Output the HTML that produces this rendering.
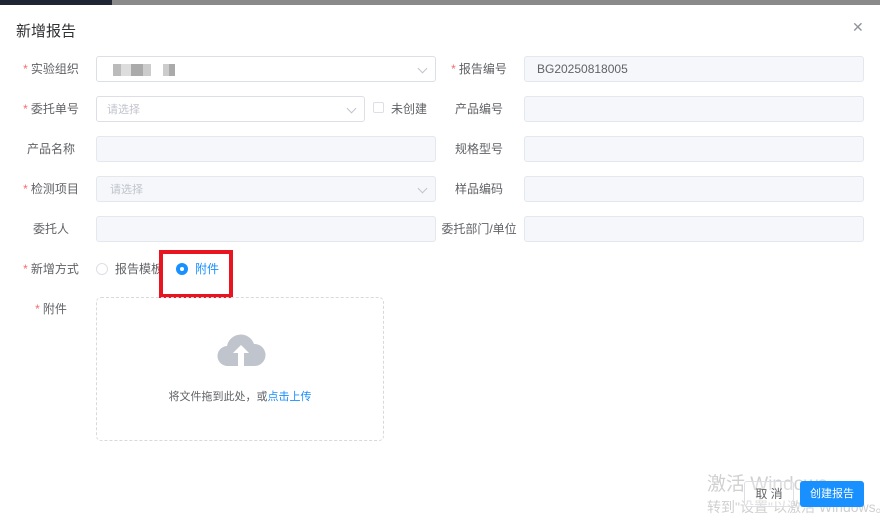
<!DOCTYPE html>
<html><head><meta charset="utf-8"><style>
*{box-sizing:border-box;margin:0;padding:0}
body{width:880px;height:521px;overflow:hidden;background:#fff;font-family:"Liberation Sans","Noto Sans CJK SC",sans-serif;font-size:12px;color:#606266;position:relative}
.top{position:absolute;left:0;top:0;width:880px;height:5px;background:#8a8a8a}
.top .a{position:absolute;left:0;top:0;width:112px;height:5px;background:#1f2633}
.title{position:absolute;left:16px;top:20px;font-size:15px;color:#303133}
.close{position:absolute;left:852px;top:19px;font-size:14px;color:#909399}
.lab{position:absolute;width:86px;text-align:center;line-height:26px;color:#606266;white-space:nowrap}
.lab i{color:#f56c6c;font-style:normal;margin-right:3px}
.inp{position:absolute;height:26px;border:1px solid #dcdfe6;border-radius:3px;background:#fff;line-height:24px;padding-left:10px}
.dis{background:#f5f7fa;border-color:#e4e7ed}
.ph{color:#c0c4cc;font-size:11px}
.arr{position:absolute;right:9px;top:8px;width:7px;height:7px;border-right:1px solid #c0c4cc;border-bottom:1px solid #c0c4cc;transform:rotate(45deg)}
.blk{display:inline-block;height:12px;background:#c8c8c8;vertical-align:middle}
</style></head><body>
<div class="top"><div class="a"></div></div>
<div class="title">新增报告</div>
<div class="close">✕</div>

<div class="lab" style="left:8px;top:56px"><i>*</i>实验组织</div>
<div class="inp" style="left:96px;top:56px;width:340px"><span class="blk" style="width:8px;margin-left:6px;background:#bbb"></span><span class="blk" style="width:10px;background:#ddd"></span><span class="blk" style="width:12px;background:#aaa"></span><span class="blk" style="width:8px;background:#ccc"></span><span class="blk" style="width:6px;margin-left:12px;background:#ccc"></span><span class="blk" style="width:6px;background:#aaa"></span><span class="arr"></span></div>
<div class="lab" style="left:436px;top:56px"><i>*</i>报告编号</div>
<div class="inp dis" style="left:524px;top:56px;width:340px;padding-left:12px;color:#606266">BG20250818005</div>

<div class="lab" style="left:8px;top:96px"><i>*</i>委托单号</div>
<div class="inp" style="left:96px;top:96px;width:269px"><span class="ph">请选择</span><span class="arr"></span></div>
<div style="position:absolute;left:373px;top:102px;width:11px;height:11px;border:1px solid #dcdfe6;border-radius:2px"></div>
<div style="position:absolute;left:391px;top:96px;line-height:26px">未创建</div>
<div class="lab" style="left:436px;top:96px">产品编号</div>
<div class="inp dis" style="left:524px;top:96px;width:340px"></div>

<div class="lab" style="left:8px;top:136px">产品名称</div>
<div class="inp dis" style="left:96px;top:136px;width:340px"></div>
<div class="lab" style="left:436px;top:136px">规格型号</div>
<div class="inp dis" style="left:524px;top:136px;width:340px"></div>

<div class="lab" style="left:8px;top:176px"><i>*</i>检测项目</div>
<div class="inp dis" style="left:96px;top:176px;width:340px;padding-left:13px"><span class="ph">请选择</span><span class="arr"></span></div>
<div class="lab" style="left:436px;top:176px">样品编码</div>
<div class="inp dis" style="left:524px;top:176px;width:340px"></div>

<div class="lab" style="left:8px;top:216px">委托人</div>
<div class="inp dis" style="left:96px;top:216px;width:340px"></div>
<div class="lab" style="left:436px;top:216px">委托部门/单位</div>
<div class="inp dis" style="left:524px;top:216px;width:340px"></div>

<div class="lab" style="left:8px;top:256px"><i>*</i>新增方式</div>
<div style="position:absolute;left:96px;top:263px;width:12px;height:12px;border:1px solid #dcdfe6;border-radius:50%"></div>
<div style="position:absolute;left:115px;top:256px;line-height:26px">报告模板</div>
<div style="position:absolute;left:176px;top:263px;width:12px;height:12px;background:#1890ff;border-radius:50%"><div style="position:absolute;left:4px;top:4px;width:4px;height:4px;background:#fff;border-radius:50%"></div></div>
<div style="position:absolute;left:195px;top:256px;line-height:26px;color:#1890ff">附件</div>
<div style="position:absolute;left:159px;top:250px;width:74px;height:48px;border:4px solid #e8141f"></div>

<div class="lab" style="left:8px;top:296px"><i>*</i>附件</div>
<div style="position:absolute;left:96px;top:297px;width:288px;height:144px;border:1px dashed #d9d9d9;border-radius:5px">
<svg style="position:absolute;left:119px;top:34px" width="50" height="36" viewBox="0 0 50 36"><path d="M12 34a10 10 0 0 1-1-20 14 14 0 0 1 27-2 11 11 0 0 1 1 22z" fill="#c0c4cc"/><path d="M25 13l-8 8h5v13h6V21h5z" fill="#fff"/></svg>
<div style="position:absolute;left:0;width:286px;top:90px;text-align:center;font-size:11px;color:#606266">将文件拖到此处，或<span style="color:#1890ff">点击上传</span></div>
</div>

<div style="position:absolute;left:707px;top:469px;font-size:19px;color:#d0d0d0">激活 Windows</div>
<div style="position:absolute;left:707px;top:497px;font-size:14px;color:#d0d0d0;white-space:nowrap">转到"设置"以激活 Windows。</div>
<div style="position:absolute;left:744px;top:481px;width:50px;height:26px;border:1px solid #dcdfe6;border-radius:3px;text-align:center;line-height:24px;color:#606266;background:rgba(255,255,255,.3)">取 消</div>
<div style="position:absolute;left:800px;top:481px;width:64px;height:26px;background:#1890ff;border-radius:3px;text-align:center;line-height:26px;color:#fff;font-size:11px">创建报告</div>
</body></html>
